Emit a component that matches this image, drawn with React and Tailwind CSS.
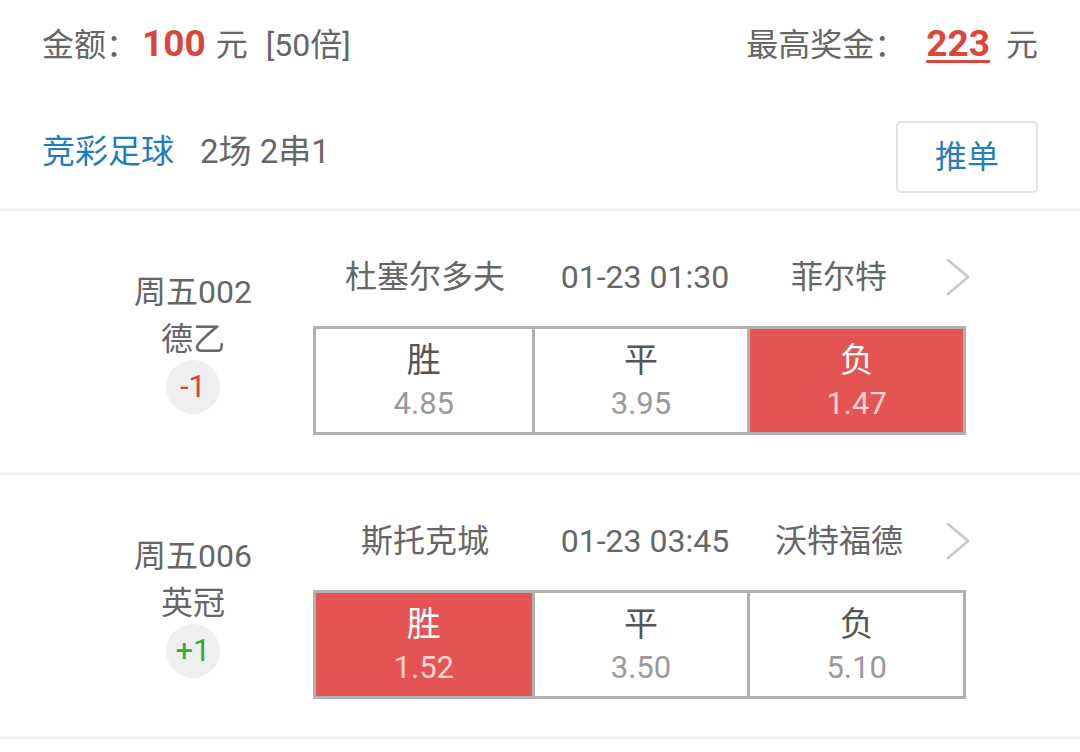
import React from "react";

const font = { fontFamily: 'Roboto, "Noto Sans CJK SC", "Noto Sans", sans-serif' };

function Chevron() {
  return (
    <svg width="26" height="38" viewBox="0 0 26 38" className="shrink-0">
      <polyline points="3,2 23,19 3,36" fill="none" stroke="#c8c8c8" strokeWidth="2.6" strokeLinecap="round" strokeLinejoin="round" />
    </svg>
  );
}

function Cell({ label, odd, selected, first }) {
  return (
    <div
      className={
        "flex flex-col items-center " +
        (first ? "" : "border-l-[3px] border-[#b0b0b0] ") +
        (selected ? "bg-[#e35453]" : "bg-white")
      }
    >
      <div className={"pt-[10px] text-[34px] leading-[42px] " + (selected ? "text-white" : "text-[#555555]")}>{label}</div>
      <div className={"mt-[4px] text-[31px] leading-[38px] " + (selected ? "text-[#fbd3d3]" : "text-[#9a9a9a]")}>{odd}</div>
    </div>
  );
}

function Match({ code, league, handicap, handicapColor, home, time, away, odds, sel }) {
  return (
    <>
      <div className="flex h-[261px]">
        <div className="w-[313px] pl-[73px] pt-[58px] flex flex-col items-center shrink-0">
          <div className="text-[32px] leading-[47px] text-[#666666]">{code}</div>
          <div className="text-[32px] leading-[47px] text-[#666666]">{league}</div>
          <div className={"-mt-[3px] w-[54px] h-[54px] rounded-full bg-[#efefef] flex items-center justify-center text-[31px] " + handicapColor}>
            {handicap}
          </div>
        </div>
        <div className="pt-[42px] flex flex-col">
          <div className="flex items-center h-[48px] text-[32px] text-[#666666]">
            <div className="w-[224px] text-center">{home}</div>
            <div className="w-[216px] text-center">{time}</div>
            <div className="w-[172px] text-center">{away}</div>
            <div className="ml-[20px]">
              <Chevron />
            </div>
          </div>
          <div className="mt-[25px] w-[653px] h-[109px] border-[3px] border-[#b0b0b0] grid grid-cols-3">
            <Cell first label="胜" odd={odds[0]} selected={sel === 0} />
            <Cell label="平" odd={odds[1]} selected={sel === 1} />
            <Cell label="负" odd={odds[2]} selected={sel === 2} />
          </div>
        </div>
      </div>
      <div className="h-[3px] bg-[#f0f0f0]" />
    </>
  );
}

export default function App() {
  return (
    <div className="w-[1080px] h-[752px] bg-white overflow-hidden" style={font}>
      <div className="px-[42px]">
        <div className="flex items-center justify-between h-[88px] text-[32px] text-[#666666]">
          <div className="flex items-baseline">
            <span>金额：</span>
            <span className="ml-[4px] font-bold text-[37px] text-[#d9473b]">100</span>
            <span className="ml-[10px]">元</span>
            <span className="ml-[18px]">[50倍]</span>
          </div>
          <div className="flex items-baseline">
            <span>最高奖金：</span>
            <span className="ml-[20px] font-bold text-[37px] text-[#d9473b] underline decoration-[3px] underline-offset-[4px]">223</span>
            <span className="ml-[16px]">元</span>
          </div>
        </div>
        <div className="flex items-center justify-between h-[120px] pt-[33px] pb-[15px]">
          <div className="flex items-baseline text-[33px] mb-[10px]">
            <span className="text-[#1f7cc0]">竞彩足球</span>
            <span className="ml-[26px] text-[#666666]">2场 2串1</span>
          </div>
          <div className="w-[142px] h-[72px] border-2 border-[#e2e2e2] rounded-[5px] flex items-center justify-center text-[32px] text-[#2a7db8]">
            推单
          </div>
        </div>
      </div>
      <div className="h-[3px] bg-[#f0f0f0]" />
      <Match
        code="周五002"
        league="德乙"
        handicap="-1"
        handicapColor="text-[#d4463b]"
        home="杜塞尔多夫"
        time="01-23 01:30"
        away="菲尔特"
        odds={["4.85", "3.95", "1.47"]}
        sel={2}
      />
      <Match
        code="周五006"
        league="英冠"
        handicap="+1"
        handicapColor="text-[#3aa83a]"
        home="斯托克城"
        time="01-23 03:45"
        away="沃特福德"
        odds={["1.52", "3.50", "5.10"]}
        sel={0}
      />
    </div>
  );
}
